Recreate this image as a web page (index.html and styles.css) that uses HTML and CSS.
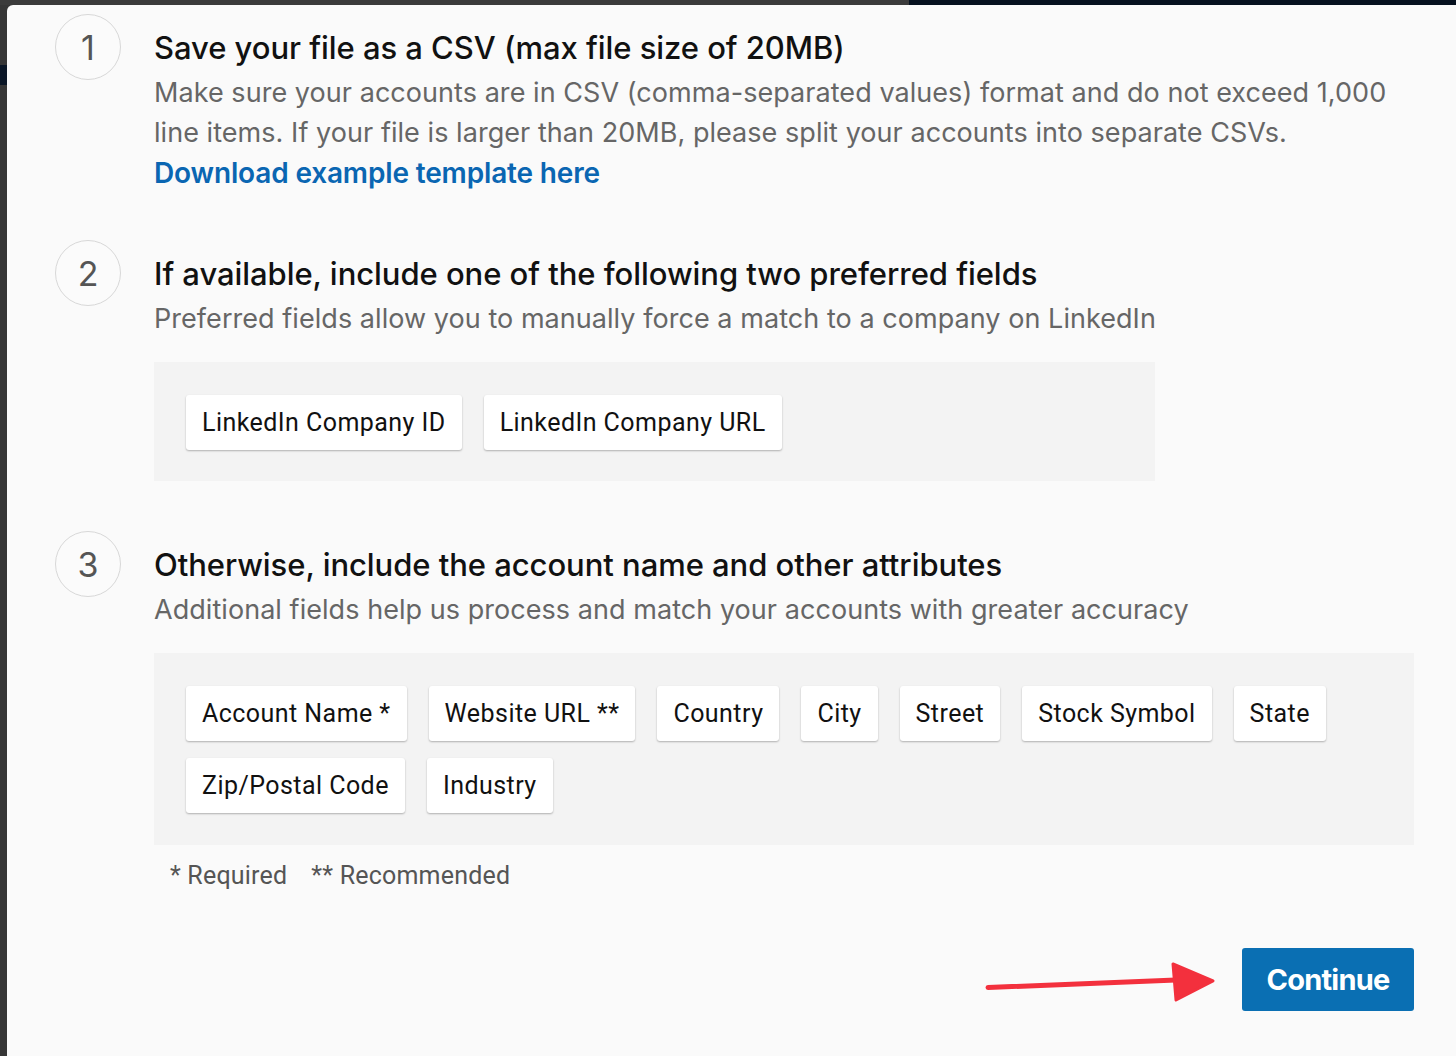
FILE: index.html
```html
<!DOCTYPE html>
<html lang="en">
<head>
<meta charset="utf-8">
<title>Upload accounts</title>
<link rel="stylesheet" href="styles.css">
</head>
<body>
<div class="backdrop">
  <div class="modal">
    <section class="step">
      <div class="num">1</div>
      <div class="content">
        <h2 class="title">Save your file as a CSV (max file size of 20MB)</h2>
        <p class="desc">Make sure your accounts are in CSV (comma-separated values) format and do not exceed 1,000 line items. If your file is larger than 20MB, please split your accounts into separate CSVs.</p>
        <a class="link" href="#">Download example template here</a>
      </div>
    </section>

    <section class="step">
      <div class="num">2</div>
      <div class="content">
        <h2 class="title">If available, include one of the following two preferred fields</h2>
        <p class="desc">Preferred fields allow you to manually force a match to a company on LinkedIn</p>
        <div class="fields fields-narrow">
          <span class="chip">LinkedIn Company ID</span>
          <span class="chip">LinkedIn Company URL</span>
        </div>
      </div>
    </section>

    <section class="step">
      <div class="num">3</div>
      <div class="content">
        <h2 class="title">Otherwise, include the account name and other attributes</h2>
        <p class="desc">Additional fields help us process and match your accounts with greater accuracy</p>
        <div class="fields">
          <span class="chip">Account Name *</span>
          <span class="chip">Website URL **</span>
          <span class="chip">Country</span>
          <span class="chip">City</span>
          <span class="chip">Street</span>
          <span class="chip">Stock Symbol</span>
          <span class="chip">State</span>
          <span class="chip">Zip/Postal Code</span>
          <span class="chip">Industry</span>
        </div>
        <p class="notes"><span>* Required</span><span>** Recommended</span></p>
      </div>
    </section>

    <div class="footer">
      <button class="continue" type="button">Continue</button>
    </div>

    <svg class="arrow" width="245" height="56" viewBox="0 0 245 56" aria-hidden="true">
      <line x1="8" y1="32.5" x2="196" y2="25" stroke="#f3303d" stroke-width="5" stroke-linecap="round"/>
      <polygon points="193,9 233,26 196,45" fill="#f3303d" stroke="#f3303d" stroke-width="3" stroke-linejoin="round"/>
    </svg>
  </div>
</div>
</body>
</html>
```

FILE: styles.css
```css
* { box-sizing: border-box; }

html, body {
  margin: 0;
  height: 100%;
}

body {
  background:
    linear-gradient(to right, #3b3b3b 0 909px, #06111f 909px) top left / 100% 5px no-repeat,
    linear-gradient(#0a1626, #0a1626) 0 65px / 7px 20px no-repeat,
    #363636;
  overflow: hidden;
  font-family: Inter, "Noto Sans", sans-serif;
}

.backdrop {
  padding: 5px 0 0 7px;
  height: 100%;
}

.modal {
  position: relative;
  background: #fafafa;
  border-top-left-radius: 6px;
  height: 100%;
  padding: 9px 42px 0 48px;
}

.step {
  display: grid;
  grid-template-columns: 66px 1fr;
  column-gap: 33px;
  margin-bottom: 47px;
}

.step:nth-of-type(2) { margin-bottom: 50px; }
.step:nth-of-type(3) { margin-bottom: 0; }

.num {
  width: 66px;
  height: 66px;
  border: 1.5px solid #d8d8d8;
  border-radius: 50%;
  display: flex;
  align-items: center;
  justify-content: center;
  font-size: 34px;
  font-weight: 400;
  color: #555;
  background: #fbfbfb;
}

.content {
  padding-top: 14px;
  min-width: 0;
}

.title {
  margin: 0;
  font-size: 31px;
  line-height: 40px;
  font-weight: 500;
  color: #111;
  letter-spacing: -0.05px;
}

.desc {
  margin: 5px 0 0;
  font-size: 27px;
  line-height: 40px;
  color: #666;
  letter-spacing: 0.05px;
}

.link {
  display: block;
  font-size: 28px;
  line-height: 40px;
  font-weight: 600;
  color: #0a66b2;
  text-decoration: none;
  letter-spacing: -0.15px;
}

.fields {
  margin-top: 23px;
  background: #f3f3f3;
  padding: 33px 32px 32px;
  display: flex;
  flex-wrap: wrap;
  column-gap: 22px;
  row-gap: 17px;
}

.fields-narrow {
  width: 1001px;
  padding-bottom: 31px;
}

.chip {
  height: 55px;
  padding: 0 16px;
  display: inline-flex;
  align-items: center;
  background: #fff;
  border-radius: 3px;
  box-shadow: 0 1px 2px rgba(0, 0, 0, 0.28);
  font-family: Roboto, "Liberation Sans", sans-serif;
  font-size: 25px;
  color: #111;
  letter-spacing: 0.45px;
}

.notes {
  margin: 14px 0 0 16px;
  display: flex;
  gap: 24px;
  font-family: Roboto, "Liberation Sans", sans-serif;
  font-size: 25px;
  line-height: 34px;
  color: #555;
  letter-spacing: 0.2px;
}

.footer {
  display: flex;
  justify-content: flex-end;
  margin-top: 55px;
}

.continue {
  width: 172px;
  height: 63px;
  border: 0;
  border-radius: 3px;
  background: #0a6fb3;
  color: #fff;
  font-family: Inter, "Noto Sans", sans-serif;
  font-size: 29px;
  font-weight: 700;
  letter-spacing: -0.8px;
  padding: 0;
}

.arrow {
  position: absolute;
  left: 973px;
  top: 950px;
}
```
